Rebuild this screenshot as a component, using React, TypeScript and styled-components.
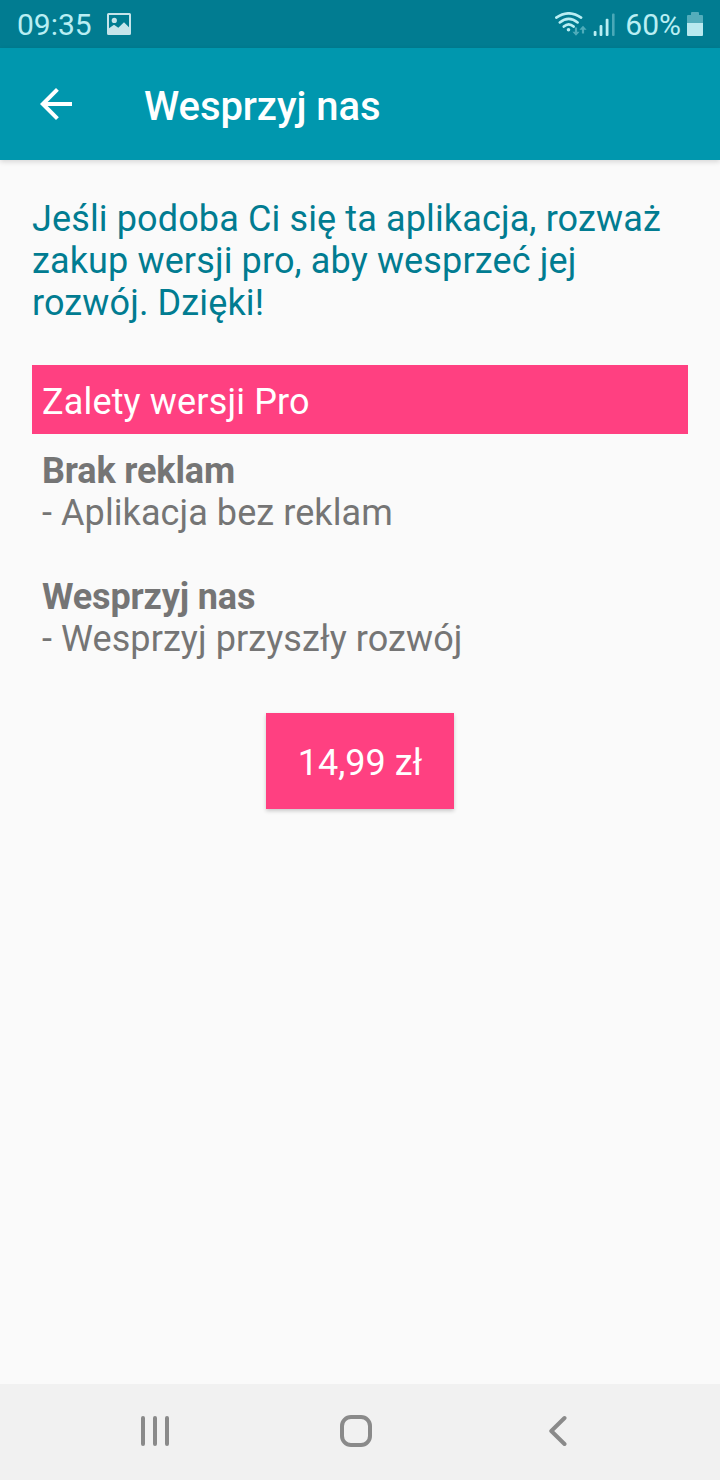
import React from 'react';
import styled, { createGlobalStyle } from 'styled-components';

const GlobalStyle = createGlobalStyle`
  * { box-sizing: border-box; }
  body { margin: 0; font-family: Roboto, sans-serif; background: #fafafa; }
`;

const Screen = styled.div`
  width: 720px;
  height: 1480px;
  display: flex;
  flex-direction: column;
  background: #fafafa;
  overflow: hidden;
`;

const StatusBar = styled.header`
  height: 48px;
  flex: none;
  display: flex;
  align-items: center;
  justify-content: space-between;
  padding: 0 17px;
  background: #017c91;
  color: #b9eef3;
  font-size: 30px;
`;

const StatusGroup = styled.div<{ $gap: number }>`
  display: flex;
  align-items: center;
  gap: ${(p) => p.$gap}px;
`;

const AppBar = styled.div`
  height: 112px;
  flex: none;
  display: flex;
  align-items: center;
  gap: 72px;
  padding-left: 40px;
  background: #0097ae;
  color: #fff;
  box-shadow: 0 2px 5px rgba(0, 0, 0, 0.14);
`;

const Title = styled.h1`
  margin: 5px 0 0;
  font-size: 40px;
  font-weight: 500;
  line-height: 47px;
  letter-spacing: -0.08px;
`;

const Content = styled.main`
  flex: 1;
  display: flex;
  flex-direction: column;
  padding: 38px 32px 0;
  font-size: 36px;
  line-height: 42px;
`;

const Intro = styled.p`
  margin: 0;
  color: #017c91;
  letter-spacing: 0.13px;
`;

const SectionTitle = styled.h2`
  height: 69px;
  margin: 41px 0 0;
  padding: 16px 10px 0;
  background: #ff4081;
  color: #fff;
  font-size: 36px;
  font-weight: 400;
  letter-spacing: 0.16px;
`;

const Benefits = styled.dl`
  display: flex;
  flex-direction: column;
  gap: 42px;
  margin: 16px 10px 0;
  color: #757575;
`;

const BenefitName = styled.dt`
  font-weight: 700;
  letter-spacing: -0.14px;
`;

const BenefitText = styled.dd`
  margin: 0;
  letter-spacing: 0.08px;
`;

const PriceButton = styled.button`
  align-self: center;
  width: 188px;
  height: 96px;
  margin-top: 53px;
  padding: 4px 0 0;
  border: 0;
  background: #ff4081;
  color: #fff;
  font: 400 36px/42px Roboto, sans-serif;
  box-shadow: 0 2px 4px rgba(0, 0, 0, 0.2);
`;

const NavBar = styled.nav`
  height: 96px;
  flex: none;
  display: flex;
  align-items: center;
  justify-content: space-between;
  padding: 0 153px 2px 141px;
  background: #f1f1f1;
`;

const benefits = [
  { name: 'Brak reklam', text: '- Aplikacja bez reklam' },
  { name: 'Wesprzyj nas', text: '- Wesprzyj przyszły rozwój' },
];

function PictureIcon() {
  return (
    <svg width="24" height="24" viewBox="107 12 24 24" fill="#c6e4ea">
      <path
        fillRule="evenodd"
        d="M108.5 13h21a1.5 1.5 0 0 1 1.5 1.5v19a1.5 1.5 0 0 1-1.5 1.5h-21a1.5 1.5 0 0 1-1.5-1.5v-19a1.5 1.5 0 0 1 1.5-1.5zM109 15v13.2l5-3.4 4.3 3 5.7-5.6 5 5V15z"
      />
      <circle cx="114.3" cy="20.4" r="2.6" />
    </svg>
  );
}

function WifiIcon() {
  return (
    <svg width="32" height="24" viewBox="555 12 32 24" fill="none" stroke="#b9eef3" strokeWidth="2.6" strokeLinecap="round">
      <path d="M556.3 17.6Q568.7 9 581.1 17.6M559.8 22.4Q568.7 15.4 577.6 22.4M563.8 26.6Q568.7 22.3 573.6 26.6" />
      <circle cx="568.5" cy="29.8" r="1.8" fill="#b9eef3" stroke="none" />
      <g fill="#b9eef3" stroke="none" opacity="0.42">
        <path d="M574.9 27.5h2.2v4.2h2.5l-3.6 4-3.6-4h2.5z" />
        <path d="M581.9 33.5h2.2v-3.8h2.5l-3.6-4-3.6 4h2.5z" />
      </g>
    </svg>
  );
}

function SignalIcon() {
  return (
    <svg width="22" height="24" viewBox="593 12 22 24" fill="#b9eef3">
      <rect x="593.7" y="31" width="2.8" height="5" rx="1" />
      <rect x="599.6" y="25" width="2.8" height="11" rx="1" />
      <rect x="605.7" y="18.7" width="2.8" height="17.3" rx="1" />
      <rect x="612" y="13.5" width="2.6" height="22.5" rx="1" opacity="0.4" />
    </svg>
  );
}

function BatteryIcon() {
  return (
    <svg width="16" height="24" viewBox="0 0 16 24" fill="#b9e9ef">
      <path d="M5 0h6a1 1 0 0 1 1 1v2h3a1 1 0 0 1 1 1v7H0V4a1 1 0 0 1 1-1h3V1a1 1 0 0 1 1-1z" opacity="0.45" />
      <path d="M0 11h16v12a1 1 0 0 1-1 1H1a1 1 0 0 1-1-1z" />
    </svg>
  );
}

export default function App() {
  return (
    <Screen>
      <GlobalStyle />
      <StatusBar>
        <StatusGroup $gap={15}>
          <span>09:35</span>
          <PictureIcon />
        </StatusGroup>
        <StatusGroup $gap={10}>
          <StatusGroup $gap={6}>
            <WifiIcon />
            <SignalIcon />
          </StatusGroup>
          <StatusGroup $gap={6}>
            <span>60%</span>
            <BatteryIcon />
          </StatusGroup>
        </StatusGroup>
      </StatusBar>
      <AppBar>
        <svg width="32" height="32" viewBox="4 4 16 16" fill="#fff">
          <path d="M20 11H7.83l5.59-5.59L12 4l-8 8 8 8 1.41-1.41L7.83 13H20v-2z" />
        </svg>
        <Title>Wesprzyj nas</Title>
      </AppBar>
      <Content>
        <Intro>Jeśli podoba Ci się ta aplikacja, rozważ zakup wersji pro, aby wesprzeć jej rozwój. Dzięki!</Intro>
        <SectionTitle>Zalety wersji Pro</SectionTitle>
        <Benefits>
          {benefits.map((b) => (
            <div key={b.name}>
              <BenefitName>{b.name}</BenefitName>
              <BenefitText>{b.text}</BenefitText>
            </div>
          ))}
        </Benefits>
        <PriceButton>14,99 zł</PriceButton>
      </Content>
      <NavBar>
        <svg width="28" height="32" viewBox="0 0 28 32" stroke="#8a8a8a" strokeWidth="4" strokeLinecap="round">
          <path d="M2 3v26M14 3v26M26 3v26" />
        </svg>
        <svg width="32" height="32" viewBox="0 0 32 32" fill="none" stroke="#8a8a8a" strokeWidth="4">
          <rect x="2" y="2" width="28" height="28" rx="9" />
        </svg>
        <svg width="24" height="32" viewBox="0 0 24 32" fill="none" stroke="#8a8a8a" strokeWidth="4" strokeLinecap="round" strokeLinejoin="round">
          <path d="M21.5 3L8.3 16l13.2 13" />
        </svg>
      </NavBar>
    </Screen>
  );
}
